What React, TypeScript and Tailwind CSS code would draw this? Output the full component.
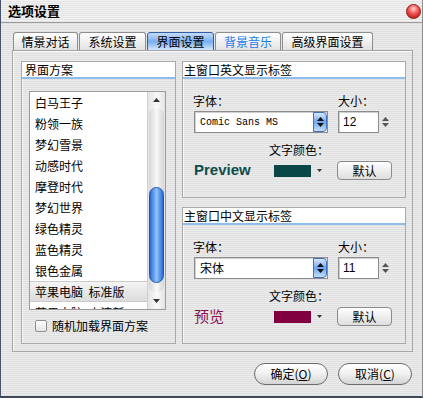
import React from "react"

const themes = [
  "白马王子",
  "粉领一族",
  "梦幻雪景",
  "动感时代",
  "摩登时代",
  "梦幻世界",
  "绿色精灵",
  "蓝色精灵",
  "银色金属",
  "苹果电脑  标准版",
  "苹果电脑  小清新",
]

const tabs = [
  { label: "情景对话", w: "w-[65px]" },
  { label: "系统设置", w: "w-[67px]" },
  { label: "界面设置", w: "w-[67px]", active: true },
  { label: "背景音乐", w: "w-[66px]", hover: true },
  { label: "高级界面设置", w: "w-[91px]" },
]

function Tri({ up, className }: { up?: boolean; className?: string }) {
  return (
    <svg width="7" height="4" viewBox="0 0 7 4" className={className}>
      <path d={up ? "M0 4 L3.5 0 L7 4 Z" : "M0 0 L7 0 L3.5 4 Z"} fill="currentColor" />
    </svg>
  )
}

function GroupHeader({ children, pad }: { children: React.ReactNode; pad: string }) {
  return (
    <div className={`h-[17px] bg-white border-b-2 border-[#8fbdeb] text-[12px] leading-[15px] text-black ${pad}`}>
      {children}
    </div>
  )
}

function FontSelect({ value, mono }: { value: string; mono?: boolean }) {
  return (
    <div className="flex h-[22px] w-[134px] border border-[#8c8c8c] bg-white shadow-[inset_1px_1px_0_#cfcfcf]">
      <div
        className={
          mono
            ? "flex-1 flex items-center pl-[5px] text-[10px] font-['Liberation_Mono',monospace] text-black"
            : "flex-1 flex items-center pl-[5px] text-[12px] text-black"
        }
      >
        {value}
      </div>
      <div className="w-[14px] h-full rounded-r-[4px] border border-[#3f72bd] bg-gradient-to-b from-[#d7e8fd] via-[#6ea6ee] to-[#c4def9] flex flex-col items-center justify-center gap-[2px] text-[#111]">
        <Tri up />
        <Tri />
      </div>
    </div>
  )
}

function SizeBox({ value }: { value: string }) {
  return (
    <div className="flex items-center">
      <div className="w-[41px] h-[22px] border border-[#8c8c8c] bg-white shadow-[inset_1px_1px_0_#cfcfcf] flex items-center pl-[4px] text-[12px] font-['Liberation_Sans',sans-serif] text-black">
        {value}
      </div>
      <div className="w-[13px] h-[22px] flex flex-col items-center justify-center gap-[2px] text-[#555]">
        <Tri up />
        <Tri />
      </div>
    </div>
  )
}

function LabelGroup({
  title,
  font,
  mono,
  size,
  preview,
}: {
  title: string
  font: string
  mono?: boolean
  size: string
  preview: React.ReactNode
  swatch?: string
}) {
  return (
    <div className="w-[224px] h-[137px] border border-[#a8a8a8] shadow-[inset_1px_1px_0_#f6f6f6] flex flex-col">
      <GroupHeader pad="pl-[1px]">{title}</GroupHeader>
      <div className="pl-[11px]">
        <div className="flex mt-[15px]">
          <div className="flex flex-col">
            <span className="text-[12px] leading-[14px] -ml-[1px]">字体：</span>
            <div className="mt-[3px]">
              <FontSelect value={font} mono={mono} />
            </div>
          </div>
          <div className="flex flex-col ml-[10px]">
            <span className="text-[12px] leading-[14px]">大小：</span>
            <div className="mt-[3px]">
              <SizeBox value={size} />
            </div>
          </div>
        </div>
        <div className="mt-[10px] pl-[75px] text-[12px] leading-[14px]">文字颜色：</div>
        {preview}
      </div>
    </div>
  )
}

function DefaultButton() {
  return (
    <button className="ml-[15px] w-[55px] h-[19px] rounded-[4px] border border-[#8a8a8a] bg-gradient-to-b from-white to-[#dedede] text-[12px] leading-[17px] text-black">
      默认
    </button>
  )
}

export default function App() {
  return (
    <div className="w-[423px] h-[398px] flex flex-col border-l border-r border-b-2 border-l-[#44546b] border-r-[#8c8c8c] border-b-[#3e4a5a] bg-[repeating-linear-gradient(to_bottom,#ebebeb_0px,#ebebeb_1px,#e0e0e0_1px,#e0e0e0_2px)] font-['Noto_Sans_CJK_SC','Noto_Sans',sans-serif] text-black overflow-hidden">
      {/* 标题栏 */}
      <div className="h-[23px] flex items-center justify-between pl-[7px] pr-[1px] border-b border-[#9c9c9c] bg-[repeating-linear-gradient(to_bottom,#f2f2f2_0px,#f2f2f2_1px,#e4e4e4_1px,#e4e4e4_2px)]">
        <span className="text-[13px] font-bold leading-[16px]">选项设置</span>
        <div className="w-[15px] h-[15px] rounded-full border border-[#8a1a1a] bg-[radial-gradient(circle_at_50%_30%,#ffd0d0_0%,#f05050_45%,#b00808_100%)]" />
      </div>

      {/* 标签页 */}
      <div className="mt-[9px] ml-[12px] flex gap-[1px] h-[18px]">
        {tabs.map(t =>
          t.active ? (
            <div
              key={t.label}
              className={`${t.w} h-[19px] rounded-t-[3px] border border-[#2f5fa6] bg-gradient-to-b from-[#c5dcfa] via-[#79aeee] to-[#d3e6fc] text-[12px] leading-[17px] text-center`}
            >
              {t.label}
            </div>
          ) : (
            <div
              key={t.label}
              className={`${t.w} h-[18px] rounded-t-[3px] border border-b-0 border-[#8e8e8e] bg-gradient-to-b from-white to-[#e2e2e2] text-[12px] leading-[17px] text-center ${t.hover ? "text-[#1c7bea]" : "text-black"}`}
            >
              {t.label}
            </div>
          )
        )}
      </div>

      {/* 内容面板 */}
      <div className="ml-[11px] w-[401px] h-[302px] border border-[#a4a4a4] shadow-[inset_1px_1px_0_#f8f8f8] flex pt-[10px] pl-[8px]">
        {/* 界面方案 */}
        <div className="w-[155px] h-[283px] border border-[#a8a8a8] shadow-[inset_1px_1px_0_#f6f6f6] flex flex-col">
          <GroupHeader pad="pl-[3px]">界面方案</GroupHeader>
          <div className="ml-[7px] mt-[12px] w-[137px] h-[219px] border border-[#9a9a9a] bg-white flex">
            <div className="w-[117px] overflow-hidden">
              {themes.map((name, i) => (
                <div
                  key={name}
                  className={
                    i === 9
                      ? "h-[21px] pl-[5px] flex items-center text-[12px] whitespace-pre bg-gradient-to-b from-[#f4f4f4] to-[#dcdcdc] border-y border-[#cbcbcb]"
                      : "h-[21px] pl-[5px] flex items-center text-[12px] whitespace-pre"
                  }
                >
                  {name}
                </div>
              ))}
            </div>
            <div className="w-[18px] flex flex-col bg-gradient-to-r from-[#e4e4e4] via-[#fafafa] to-[#e4e4e4] border-l border-[#d0d0d0]">
              <div className="h-[16px] flex items-center justify-center text-[#333]">
                <Tri up />
              </div>
              <div className="flex-1 mx-[1px] rounded-full bg-gradient-to-r from-[#d6d6d6] via-[#f7f7f7] to-[#d6d6d6] flex flex-col">
                <div className="h-[79px]" />
                <div className="h-[96px] rounded-full border border-[#1d56b3] bg-gradient-to-r from-[#2a69d4] via-[#8fc3ff] to-[#2a69d4]" />
              </div>
              <div className="h-[16px] flex items-center justify-center text-[#333]">
                <Tri />
              </div>
            </div>
          </div>
          <div className="ml-[13px] mt-[9px] flex items-center gap-[5px]">
            <div className="w-[12px] h-[12px] border border-[#8e8e8e] rounded-[2px] bg-gradient-to-b from-white to-[#e4e4e4]" />
            <span className="text-[12px] leading-[14px]">随机加载界面方案</span>
          </div>
        </div>

        {/* 右侧 */}
        <div className="ml-[6px] flex flex-col gap-[9px]">
          <LabelGroup
            title="主窗口英文显示标签"
            font="Comic Sans MS"
            mono
            size="12"
            preview={
              <div className="mt-[4px] flex items-center h-[19px]">
                <span className="w-[80px] text-[15px] font-bold font-['Liberation_Sans',sans-serif] text-[#0c4e4a]">
                  Preview
                </span>
                <div className="w-[37px] h-[12px] bg-[#0c4747]" />
                <Tri className="ml-[6px] w-[5px] h-[3px] text-[#333]" />
                <DefaultButton />
              </div>
            }
          />
          <LabelGroup
            title="主窗口中文显示标签"
            font="宋体"
            size="11"
            preview={
              <div className="mt-[4px] flex items-center h-[19px]">
                <span className="w-[80px] text-[15px] text-[#8a1450]">预览</span>
                <div className="w-[37px] h-[12px] bg-[#800040]" />
                <Tri className="ml-[6px] w-[5px] h-[3px] text-[#333]" />
                <DefaultButton />
              </div>
            }
          />
        </div>
      </div>

      {/* 底部按钮 */}
      <div className="mt-[11px] flex justify-end gap-[10px] pr-[10px]">
        <button className="w-[74px] h-[22px] rounded-full border border-[#6c6c6c] bg-gradient-to-b from-white via-[#f0f0f0] to-[#d4d4d4] text-[12px] leading-[20px] text-black">
          确定(<u>O</u>)
        </button>
        <button className="w-[74px] h-[22px] rounded-full border border-[#6c6c6c] bg-gradient-to-b from-white via-[#f0f0f0] to-[#d4d4d4] text-[12px] leading-[20px] text-black">
          取消(<u>C</u>)
        </button>
      </div>
    </div>
  )
}
